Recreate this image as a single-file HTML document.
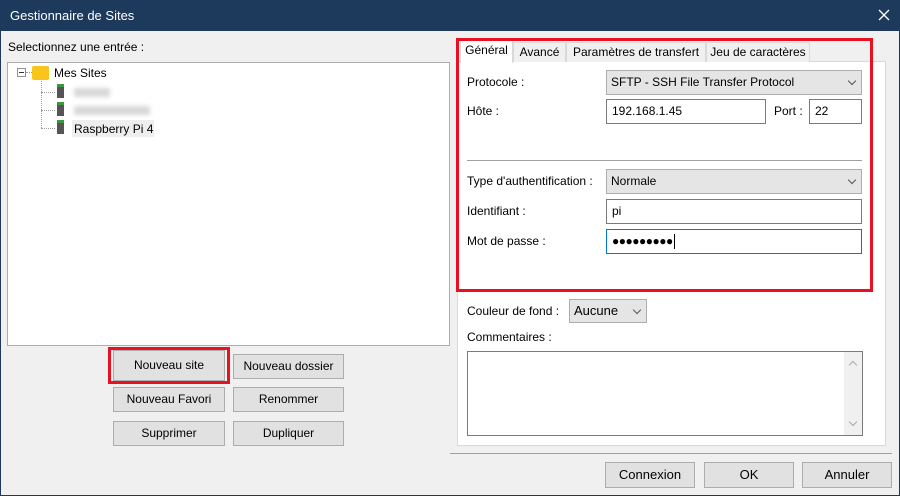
<!DOCTYPE html>
<html><head><meta charset="utf-8"><style>
*{box-sizing:border-box;margin:0;padding:0}
body{width:900px;height:496px;overflow:hidden;background:#f0f0f0;font-family:"Liberation Sans",sans-serif;font-size:12px;color:#000;position:relative}
.a{position:absolute}
.t{position:absolute;white-space:nowrap;line-height:14px}
.btn{position:absolute;background:#e1e1e1;border:1px solid #adadad;text-align:center;line-height:23px;font-size:12px}
.inp{position:absolute;background:#fff;border:1px solid #7a7a7a;padding-left:5px;line-height:22px}
.sel{position:absolute;background:#e5e5e5;border:1px solid #adadad;padding-left:4px;line-height:22px}
.sel:after{content:"";position:absolute;right:6px;top:7px;width:5px;height:5px;border-right:1px solid #555;border-bottom:1px solid #555;transform:rotate(45deg)}
.tab{position:absolute;top:42px;height:20px;border:1px solid #d9d9d9;border-bottom:none;background:#f0f0f0;line-height:18px;text-align:center}
.red{position:absolute;border:3px solid #e81123}
</style></head><body>
<div class="a" style="left:0;top:0;width:900px;height:31px;background:#1d3a5d"></div>
<div class="t" style="left:10px;top:9px;color:#fff;font-size:13px">Gestionnaire de Sites</div>
<svg class="a" style="left:878px;top:9px" width="12" height="12"><path d="M1 1L11 11M11 1L1 11" stroke="#fff" stroke-width="1.3"/></svg>
<div class="a" style="left:0;top:31px;width:1px;height:465px;background:#1d3a5d"></div>
<div class="a" style="left:899px;top:31px;width:1px;height:465px;background:#1d3a5d"></div>
<div class="a" style="left:0;top:495px;width:900px;height:1px;background:#1d3a5d"></div>

<div class="t" style="left:8px;top:40px">Selectionnez une entrée :</div>
<div class="a" style="left:7px;top:62px;width:443px;height:284px;background:#fff;border:1px solid #adadad"></div>
<div class="a" style="left:17px;top:68px;width:9px;height:9px;border:1px solid #919191;background:#fff"></div>
<div class="a" style="left:19px;top:72px;width:5px;height:1px;background:#333"></div>
<div class="a" style="left:26px;top:72px;width:6px;border-top:1px dotted #999"></div>
<div class="a" style="left:32px;top:66px;width:17px;height:14px;background:#f8c51c;border-radius:2px"></div>
<div class="t" style="left:54px;top:66px">Mes Sites</div>
<div class="a" style="left:41px;top:81px;height:47px;border-left:1px dotted #999"></div>
<div class="a" style="left:41px;top:92px;width:14px;border-top:1px dotted #999"></div>
<div class="a" style="left:41px;top:110px;width:14px;border-top:1px dotted #999"></div>
<div class="a" style="left:41px;top:128px;width:14px;border-top:1px dotted #999"></div>
<div class="a" style="left:57px;top:84px;width:7px;height:14px;background:#555;border-top:3px solid #3a9a3a"></div>
<div class="a" style="left:57px;top:102px;width:7px;height:14px;background:#555;border-top:3px solid #3a9a3a"></div>
<div class="a" style="left:57px;top:120px;width:7px;height:14px;background:#555;border-top:3px solid #3a9a3a"></div>
<div class="a" style="left:74px;top:88px;width:36px;height:9px;background:#d8d8d8;filter:blur(2px)"></div>
<div class="a" style="left:74px;top:106px;width:76px;height:9px;background:#d8d8d8;filter:blur(2px)"></div>
<div class="a" style="left:72px;top:120px;width:82px;height:17px;background:#eee"></div>
<div class="t" style="left:74px;top:122px">Raspberry Pi 4</div>

<div class="btn" style="left:113px;top:350px;width:112px;height:31px;line-height:29px">Nouveau site</div>
<div class="red" style="left:108px;top:347px;width:122px;height:37px"></div>
<div class="btn" style="left:233px;top:354px;width:111px;height:25px">Nouveau dossier</div>
<div class="btn" style="left:113px;top:387px;width:112px;height:25px">Nouveau Favori</div>
<div class="btn" style="left:233px;top:387px;width:111px;height:25px">Renommer</div>
<div class="btn" style="left:113px;top:421px;width:112px;height:25px">Supprimer</div>
<div class="btn" style="left:233px;top:421px;width:111px;height:25px">Dupliquer</div>

<div class="a" style="left:457px;top:61px;width:429px;height:385px;background:#fff;border:1px solid #d9d9d9"></div>
<div class="tab" style="left:513px;width:53px">Avancé</div>
<div class="tab" style="left:566px;width:140px">Paramètres de transfert</div>
<div class="tab" style="left:706px;width:104px">Jeu de caractères</div>
<div class="tab" style="left:460px;top:40px;width:53px;height:23px;background:#fff">Général</div>

<div class="t" style="left:467px;top:75px">Protocole :</div>
<div class="sel" style="left:606px;top:70px;width:256px;height:25px">SFTP - SSH File Transfer Protocol</div>
<div class="t" style="left:467px;top:104px">Hôte :</div>
<div class="inp" style="left:606px;top:99px;width:160px;height:25px">192.168.1.45</div>
<div class="t" style="left:774px;top:104px">Port :</div>
<div class="inp" style="left:809px;top:99px;width:53px;height:25px">22</div>
<div class="a" style="left:467px;top:160px;width:395px;height:1px;background:#a0a0a0"></div>
<div class="t" style="left:467px;top:174px">Type d'authentification :</div>
<div class="sel" style="left:606px;top:169px;width:256px;height:25px">Normale</div>
<div class="t" style="left:467px;top:204px">Identifiant :</div>
<div class="inp" style="left:606px;top:199px;width:256px;height:25px">pi</div>
<div class="t" style="left:467px;top:234px">Mot de passe :</div>
<div class="inp" style="left:606px;top:229px;width:256px;height:25px;border-color:#0078d7;font-size:12px;letter-spacing:-0.5px">●●●●●●●●●<span style="display:inline-block;width:1px;height:15px;background:#000;vertical-align:middle;margin-left:1px"></span></div>
<div class="red" style="left:456px;top:38px;width:417px;height:254px"></div>

<div class="t" style="left:467px;top:304px">Couleur de fond :</div>
<div class="sel" style="left:569px;top:299px;width:78px;height:24px;font-size:13px">Aucune</div>
<div class="t" style="left:467px;top:330px">Commentaires :</div>
<div class="a" style="left:467px;top:351px;width:396px;height:85px;background:#fff;border:1px solid #7a7a7a"></div>
<div class="a" style="left:844px;top:352px;width:18px;height:83px;background:#f0f0f0"></div>
<div class="a" style="left:850px;top:362px;width:6px;height:6px;border-left:1px solid #aaa;border-top:1px solid #aaa;transform:rotate(45deg)"></div>
<div class="a" style="left:850px;top:419px;width:6px;height:6px;border-right:1px solid #aaa;border-bottom:1px solid #aaa;transform:rotate(45deg)"></div>

<div class="a" style="left:450px;top:453px;width:442px;height:1px;background:#a0a0a0"></div>
<div class="btn" style="left:605px;top:462px;width:90px;height:26px;line-height:24px;font-size:13px">Connexion</div>
<div class="btn" style="left:704px;top:462px;width:90px;height:26px;line-height:24px;font-size:13px">OK</div>
<div class="btn" style="left:802px;top:462px;width:90px;height:26px;line-height:24px;font-size:13px">Annuler</div>
</body></html>
